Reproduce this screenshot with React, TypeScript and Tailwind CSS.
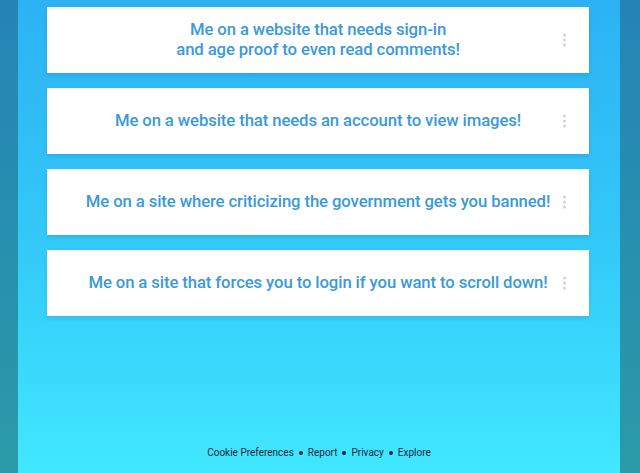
import React from 'react';

const posts = [
  { id: 'p1', lines: ['Me on a website that needs sign-in', 'and age proof to even read comments!'] },
  { id: 'p2', lines: ['Me on a website that needs an account to view images!'] },
  { id: 'p3', lines: ['Me on a site where criticizing the government gets you banned!'] },
  { id: 'p4', lines: ['Me on a site that forces you to login if you want to scroll down!'] },
];

const footerLinks = ['Cookie Preferences', 'Report', 'Privacy', 'Explore'];

const Kebab = () => (
  <div className="absolute right-[23px] top-1/2 -translate-y-1/2 flex flex-col gap-[2px]">
    <span className="block w-[3px] h-[3px] rounded-full bg-[#cbd3da]" />
    <span className="block w-[3px] h-[3px] rounded-full bg-[#cbd3da]" />
    <span className="block w-[3px] h-[3px] rounded-full bg-[#cbd3da]" />
  </div>
);

const PostCard: React.FC<{ lines: string[] }> = ({ lines }) => (
  <div className="relative bg-white h-[66px] flex flex-col items-center justify-center shadow-[0_2px_4px_rgba(0,60,110,0.15)]">
    {lines.map((l) => (
      <p key={l} className="text-[#3a9ad9] text-[16.7px] font-medium leading-[20px] text-center tracking-[-0.1px]">
        {l}
      </p>
    ))}
    <Kebab />
  </div>
);

export default function App() {
  return (
    <div
      className="flex min-h-[473px] bg-gradient-to-b from-[#2583b5] to-[#2b9ba8]"
      style={{ fontFamily: 'Roboto, "Noto Sans", sans-serif' }}
    >
      <div className="flex flex-col flex-1 ml-[18px] mr-[20px] bg-gradient-to-b from-[#2cb2f4] via-[#33c8f8] to-[#41e7ff]">
        <div className="flex flex-col gap-[15px] pt-[7px] pl-[29px] pr-[31px]">
          {posts.map((p) => (
            <PostCard key={p.id} lines={p.lines} />
          ))}
        </div>
        <div className="flex-1" />
        <div className="flex items-center justify-center gap-[5px] pb-[13px] text-[10px] text-[#1b2a3a]">
          {footerLinks.map((link, i) => (
            <React.Fragment key={link}>
              {i > 0 && <span className="block w-[4px] h-[4px] rounded-full bg-[#1b2a3a]" />}
              <span>{link}</span>
            </React.Fragment>
          ))}
        </div>
      </div>
    </div>
  );
}
